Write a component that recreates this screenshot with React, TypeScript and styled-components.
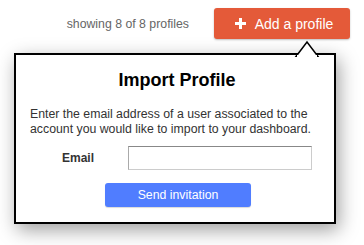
import React from "react";
import styled, { createGlobalStyle } from "styled-components";

const Global = createGlobalStyle`
  html, body { margin: 0; padding: 0; background: #fff; }
  body { font-family: "Liberation Sans", Arial, sans-serif; }
  * { box-sizing: border-box; }
`;

const Page = styled.div`
  width: 364px;
  height: 245px;
  padding: 8px 14px 0 14px;
`;

const TopBar = styled.div`
  display: flex;
  justify-content: flex-end;
  align-items: center;
  gap: 25px;
  height: 31px;
`;

const Count = styled.span`
  font-size: 12.3px;
  color: #666;
  padding-top: 1px;
`;

const AddButton = styled.button`
  width: 136px;
  height: 31px;
  border: none;
  border-radius: 3px;
  background: #e45a39;
  color: #fff;
  font-family: "Liberation Sans", Arial, sans-serif;
  font-size: 14px;
  display: flex;
  align-items: center;
  justify-content: center;
  gap: 9px;
  padding: 0 0 0 4px;
  box-shadow: 0 1px 2px rgba(0, 0, 0, 0.25);
`;

const Popup = styled.div`
  position: relative;
  margin-top: 14px;
  width: 322px;
  height: 171px;
  border: 2px solid #000;
  background: #fff;
  box-shadow: 3px 6px 18px rgba(0, 0, 0, 0.38);
  display: flex;
  flex-direction: column;
`;

const Arrow = styled.svg`
  position: absolute;
  top: -15px;
  left: 278px;
`;

const Title = styled.h2`
  margin: 14px 0 0 0;
  text-align: center;
  font-size: 18px;
  font-weight: bold;
  line-height: 22px;
  color: #000;
  padding-left: 4px;
`;

const Text = styled.p`
  margin: 16px 0 0 0;
  padding: 0 10px 0 14px;
  font-size: 12.3px;
  line-height: 15px;
  color: #333;
`;

const FieldRow = styled.div`
  display: flex;
  align-items: center;
  margin-top: 9px;
  padding-left: 46px;
`;

const Label = styled.label`
  width: 66px;
  font-size: 12px;
  font-weight: bold;
  color: #333;
`;

const Input = styled.input`
  width: 184px;
  height: 24px;
  border: 1px solid #ccc;
  border-top-color: #888;
  border-left-color: #aaa;
  outline: none;
  padding: 0 4px;
`;

const Actions = styled.div`
  display: flex;
  justify-content: center;
  padding-left: 6px;
  margin-top: 13px;
`;

const SendButton = styled.button`
  width: 146px;
  height: 24px;
  border: none;
  border-radius: 3px;
  background: #507dff;
  color: #fff;
  font-family: "Liberation Sans", Arial, sans-serif;
  font-size: 12.3px;
  padding: 0;
  box-shadow: 0 1px 1px rgba(0, 0, 0, 0.15);
`;

export default function App() {
  return (
    <>
      <Global />
      <Page>
        <TopBar>
          <Count>showing 8 of 8 profiles</Count>
          <AddButton>
            <svg width="11" height="11" viewBox="0 0 11 11">
              <path d="M4 0h3v4h4v3H7v4H4V7H0V4h4z" fill="#fff" />
            </svg>
            <span>Add a profile</span>
          </AddButton>
        </TopBar>
        <Popup>
          <Arrow width="26" height="17" viewBox="0 0 26 17">
            <polygon points="2,16.5 13,2 24,16.5" fill="#fff" stroke="#000" strokeWidth="1.5" />
            <rect x="3" y="15" width="20" height="3" fill="#fff" />
          </Arrow>
          <Title>Import Profile</Title>
          <Text>
            Enter the email address of a user associated to the account you would like to import to your dashboard.
          </Text>
          <FieldRow>
            <Label>Email</Label>
            <Input type="text" />
          </FieldRow>
          <Actions>
            <SendButton>Send invitation</SendButton>
          </Actions>
        </Popup>
      </Page>
    </>
  );
}
